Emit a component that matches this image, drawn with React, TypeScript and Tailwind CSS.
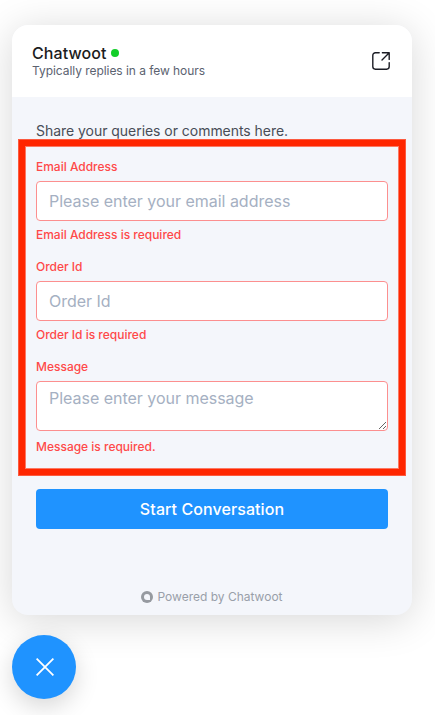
import React from 'react';

function Field({ label, error, children }: { label: string; error: string; children: React.ReactNode }) {
  return (
    <label className="flex flex-col text-xs font-medium tracking-[-0.01px] text-[#ff4949]">
      <span className="h-4 leading-4">{label}</span>
      <span className="mt-1.5 flex">{children}</span>
      <span className="mt-1.5 h-4 leading-4">{error}</span>
    </label>
  );
}

const control =
  'block w-full rounded border border-[#fc8f8f] bg-white px-3 text-base font-normal tracking-[-0.02px] text-slate-700 outline-none placeholder:text-[#a5b0c2]';

export default function App() {
  return (
    <div className="h-[715px] w-[435px] overflow-hidden bg-white pl-3 pt-[25px] font-['Inter',sans-serif]">
      <main className="flex h-[590px] w-[400px] flex-col overflow-hidden rounded-2xl bg-[#f4f6fb] shadow-[0_5px_40px_rgba(0,0,0,0.16)]">
        <header className="flex h-[72px] shrink-0 items-center justify-between bg-white px-5">
          <div>
            <h1 className="flex h-5 items-center text-base font-medium leading-5 text-[#1b1c20]">
              <span className="tracking-[0.08px]">Chatwoot</span>
              <span className="ml-1 size-2 rounded-full bg-[#13ce29]" />
            </h1>
            <p className="text-xs leading-4 tracking-[-0.05px] text-[#5b6270]">Typically replies in a few hours</p>
          </div>
          <svg className="mr-[1px] size-5" viewBox="0 0 20 20" fill="none" stroke="#1b1c24" strokeWidth="1.4" strokeLinecap="round" strokeLinejoin="round">
            <path d="M8.2 1.8H4.4A2.6 2.6 0 0 0 1.8 4.4v11.2a2.6 2.6 0 0 0 2.6 2.6h11.2a2.6 2.6 0 0 0 2.6-2.6v-4M11.4 1.8h6.8v6.6M18 2l-7 7" />
          </svg>
        </header>
        <form className="flex flex-col px-6 pt-6">
          <p className="h-5 text-sm leading-5 tracking-[-0.04px] text-[#484d57]">Share your queries or comments here.</p>
          <div className="relative flex flex-col gap-4 pt-[18px]">
            <Field label="Email Address" error="Email Address is required">
              <input className={`${control} h-10`} placeholder="Please enter your email address" />
            </Field>
            <Field label="Order Id" error="Order Id is required">
              <input className={`${control} h-10`} placeholder="Order Id" />
            </Field>
            <Field label="Message" error="Message is required.">
              <textarea className={`${control} mb-0.5 h-[50px] resize-y overflow-hidden pt-1 leading-6`} placeholder="Please enter your message" />
            </Field>
            <div className="pointer-events-none absolute -inset-x-[17px] -bottom-5 -top-px border-6 border-[#ff2600] shadow-[0_0_0_1px_rgba(255,38,0,0.75),inset_0_0_0_1px_rgba(255,38,0,0.6)]" />
          </div>
          <button type="button" className="mt-[34px] h-10 rounded bg-[#1f93ff] text-base font-medium tracking-[0.08px] text-white">
            Start Conversation
          </button>
        </form>
        <footer className="mt-auto flex h-9 items-center justify-center text-xs text-[#999fa9]">
          <svg className="mr-1 size-3" viewBox="0 0 12 12">
            <circle cx="6" cy="6" r="6" fill="#969aa0" />
            <path d="M9 9H6A3 3 0 1 1 9 6z" fill="#f4f6fb" />
          </svg>
          Powered by Chatwoot
        </footer>
      </main>
      <button type="button" aria-label="Close chat" className="mt-5 flex size-16 items-center justify-center rounded-full bg-[#1f93ff] shadow-[0_8px_24px_rgba(0,0,0,0.16)]">
        <svg className="ml-[2px] size-[18px]" viewBox="0 0 18 18" stroke="white" strokeWidth="1.8">
          <path d="M.6.6l16.8 16.8M17.4.6.6 17.4" />
        </svg>
      </button>
    </div>
  );
}
